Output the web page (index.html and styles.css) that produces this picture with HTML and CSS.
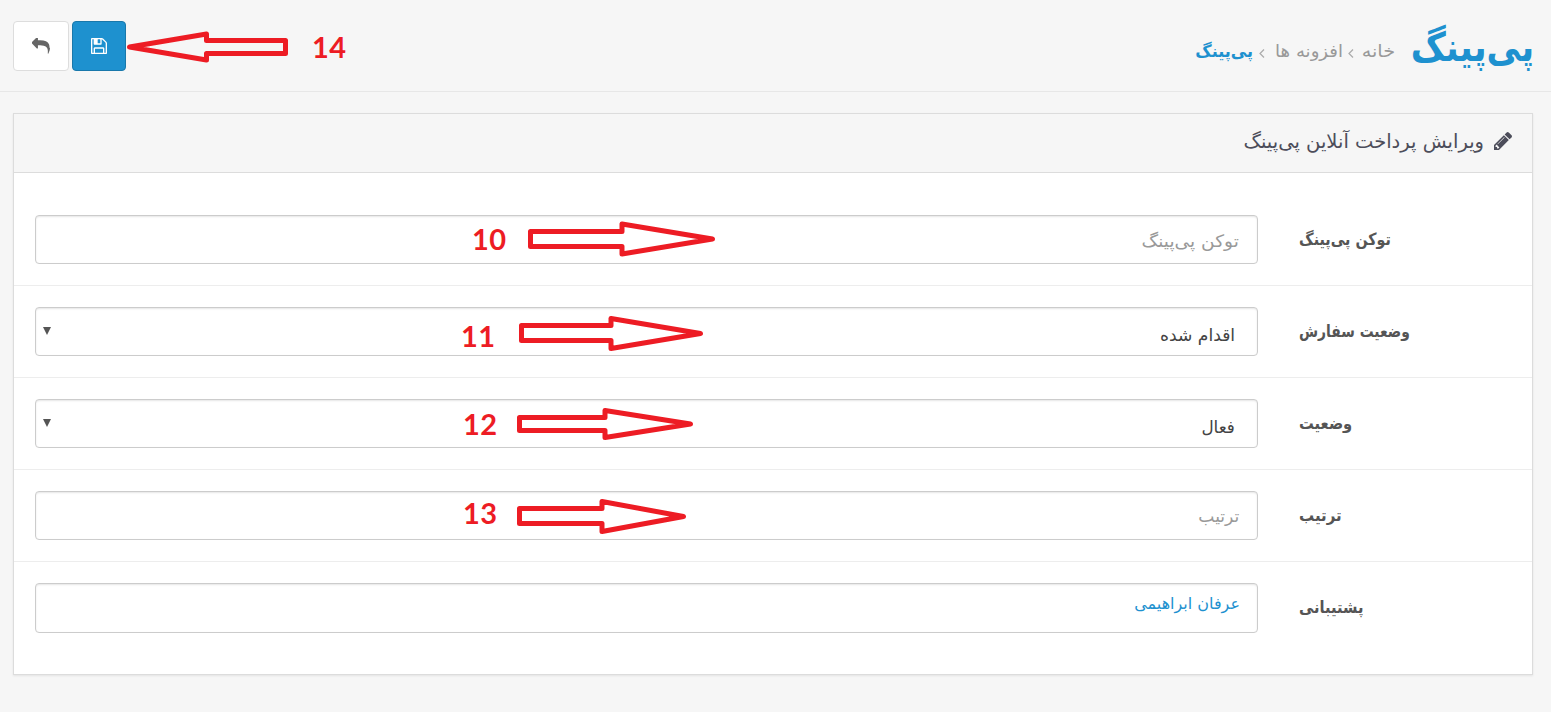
FILE: index.html
```html
<!DOCTYPE html>
<html lang="fa" dir="rtl">
<head>
<meta charset="utf-8">
<title>پی‌پینگ</title>
<link rel="stylesheet" href="styles.css">
</head>
<body>
<header class="page-header">
  <div class="heading">
    <h1 class="title">پی‌پینگ</h1>
    <nav class="breadcrumb">
      <span class="crumb crumb-home">خانه</span>
      <svg class="sep" viewBox="0 0 6 9"><path d="M5 .5 1 4.5l4 4"/></svg>
      <span class="crumb crumb-ext">افزونه ها</span>
      <svg class="sep sep-wide" viewBox="0 0 6 9"><path d="M5 .5 1 4.5l4 4"/></svg>
      <span class="crumb crumb-active">پی‌پینگ</span>
    </nav>
  </div>
  <div class="actions">
    <button class="btn btn-primary" type="button" aria-label="ذخیره"><svg class="icon-save" viewBox="0 0 1536 1536"><path transform="matrix(1 0 0 -1 0 1408)" d="M384 0h768v384h-768v-384zM1280 0h128v896q0 14 -10 38.5t-20 34.5l-281 281q-10 10 -34 20t-39 10v-416q0 -40 -28 -68t-68 -28h-576q-40 0 -68 28t-28 68v416h-128v-1280h128v416q0 40 28 68t68 28h832q40 0 68 -28t28 -68v-416zM896 928v320q0 13 -9.500 22.500t-22.500 9.500h-192q-13 0 -22.500 -9.500t-9.500 -22.500v-320q0 -13 9.500 -22.500t22.500 -9.500h192q13 0 22.500 9.500t9.500 22.500zM1536 896v-928q0 -40 -28 -68t-68 -28h-1344q-40 0 -68 28t-28 68v1344q0 40 28 68t68 28h928q40 0 88 -20t76 -48l280 -280q28 -28 48 -76t20 -88z"/></svg></button>
    <button class="btn btn-default" type="button" aria-label="بازگشت"><svg class="icon-reply" viewBox="0 0 1792 1536"><path transform="matrix(1 0 0 -1 0 1408)" d="M1792 416q0 -166 -127 -451q-3 -7 -10.500 -24t-13.500 -30t-13 -22q-12 -17 -28 -17q-15 0 -23.500 10t-8.500 25q0 9 2.500 26.500t2.500 23.500q5 68 5 123q0 112 -19.500 200.500t-54 153.500t-88.500 112t-114.500 79.500t-143.500 48.500t-163 22.500t-180 6.500h-224v-256q0 -26 -19 -45t-45 -19t-45 19l-512 512q-19 19 -19 45t19 45l512 512q19 19 45 19t45 -19t19 -45v-256h224q713 0 875 -403q53 -134 53 -333z"/></svg></button>
  </div>
</header>

<main class="panel">
  <div class="panel-head">
    <svg class="icon-pencil" viewBox="0 0 1515 1515"><path transform="matrix(1 0 0 -1 0 1387)" d="M363 0l91 91l-235 235l-91 -91v-107h128v-128h107zM886 928q0 22 -22 22q-10 0 -17 -7l-542 -542q-7 -7 -7 -17q0 -22 22 -22q10 0 17 7l542 542q7 7 7 17zM832 1120l416 -416l-832 -832h-416v416zM1515 1024q0 -53 -37 -90l-166 -166l-416 416l166 165q36 38 90 38q53 0 91 -38l235 -234q37 -39 37 -91z"/></svg>
    <h2 class="panel-title">ویرایش پرداخت آنلاین پی‌پینگ</h2>
  </div>
  <form class="panel-body">
    <div class="row">
      <div class="label"><span class="label-token">توکن پی‌پینگ</span></div>
      <div class="field"><span class="placeholder value-token">توکن پی‌پینگ</span></div>
    </div>
    <div class="row">
      <div class="label"><span class="label-order">وضعیت سفارش</span></div>
      <div class="field select"><span class="value-order">اقدام شده</span><i class="caret"></i></div>
    </div>
    <div class="row">
      <div class="label"><span class="label-status">وضعیت</span></div>
      <div class="field select"><span class="value-status">فعال</span><i class="caret"></i></div>
    </div>
    <div class="row">
      <div class="label"><span class="label-sort">ترتیب</span></div>
      <div class="field"><span class="placeholder value-sort">ترتیب</span></div>
    </div>
    <div class="row">
      <div class="label"><span class="label-support">پشتیبانی</span></div>
      <div class="field field-link"><a class="value-support">عرفان ابراهیمی</a></div>
    </div>
  </form>
</main>

<svg class="annotations" viewBox="0 0 1551 712" direction="ltr">
  <g class="arrows">
    <path d="M129.500 47 206.500 34v6.500h79v13h-79V60z"/>
    <path d="M712.500 239 622 224v7.500h-91.500v15H622v7.500z"/>
    <path d="M700.500 333.500 611 318.500v7h-89.500v15H611v8z"/>
    <path d="M690.500 424 605 410.500v7h-85.500v13H605v7z"/>
    <path d="M683.500 516.500 602 501.500v7h-82.500v15H602v8z"/>
  </g>
  <g class="numbers">
    <text x="312" y="58" textLength="34">14</text>
    <text x="472" y="250" textLength="34">10</text>
    <text x="461" y="347" textLength="34">11</text>
    <text x="463" y="435" textLength="34">12</text>
    <text x="463" y="524" textLength="34">13</text>
  </g>
</svg>
</body>
</html>
```
FILE: styles.css
```css
* { box-sizing: border-box; }

body {
  margin: 0;
  height: 712px;
  overflow: hidden;
  background: #f6f6f6;
  color: #4c4d5a;
  font-family: "DejaVu Sans", sans-serif;
}

.page-header {
  display: flex;
  justify-content: space-between;
  align-items: flex-start;
  height: 92px;
  padding: 21px 18px 0 13px;
  border-bottom: 1px solid #e7e7e7;
}

.heading { display: flex; align-items: flex-start; }

.title {
  margin: 0;
  width: 122px;
  font-size: 38px;
  line-height: 48px;
  font-weight: bold;
  white-space: nowrap;
  color: #1e91cf;
  transform: translate(1px, 2px) scale(.9, 1.06);
  transform-origin: right center;
}

.breadcrumb {
  display: flex;
  align-items: center;
  height: 62px;
  margin-right: 16px;
  font-size: 16px;
  white-space: nowrap;
  color: #999;
}

.crumb { flex: none; line-height: 24px; transform-origin: right center; }
.crumb-home { width: 34px; transform: scale(1.2, 1.08); }
.crumb-ext { width: 68px; transform: scale(1.13, 1.08); }
.crumb-active { width: 58px; font-weight: bold; color: #1e91cf; transform: scaleY(1.08); }

.sep {
  flex: none;
  width: 6px;
  height: 9px;
  margin: 2px 7px 0 5px;
  fill: none;
  stroke: #aaa;
  stroke-width: 1.2;
}
.sep-wide { margin: 2px 10px 0 6px; }

.actions { display: flex; gap: 3px; }

.btn {
  display: flex;
  align-items: center;
  justify-content: center;
  height: 50px;
  padding: 0;
  border-radius: 4px;
}
.btn-primary { width: 54px; background: #1e91cf; border: 1px solid #1978ab; }
.btn-default { width: 56px; background: #fff; border: 1px solid #ddd; }
.icon-save { width: 16px; height: 16px; fill: #fff; }
.icon-reply { width: 18px; height: 16px; fill: #666; }

.panel {
  width: 1520px;
  height: 562px;
  margin: 21px 18px 0 0;
  background: #fff;
  border: 1px solid #dcdcdc;
  box-shadow: 0 1px 2px rgba(0, 0, 0, .08);
}

.panel-head {
  display: flex;
  align-items: flex-start;
  gap: 10px;
  height: 59px;
  padding: 18px 20px 0;
  background: #f6f6f6;
  border-bottom: 1px solid #dcdcdc;
}
.icon-pencil { width: 18px; height: 18px; fill: #4c4d5a; }

.panel-title {
  margin: -1px 0 0;
  font-size: 19.500px;
  line-height: 22px;
  font-weight: normal;
  white-space: nowrap;
}

.panel-body { padding-top: 21px; }

.row {
  display: flex;
  align-items: flex-start;
  height: 92px;
  padding: 21px 20px 0 0;
  border-bottom: 1px solid #ededed;
}
.row:last-child { border-bottom: 0; }

.label {
  width: 213px;
  height: 49px;
  direction: ltr;
  font-size: 16px;
  line-height: 49px;
  font-weight: bold;
  white-space: nowrap;
  color: #555;
}
.label span { display: inline-block; transform-origin: left center; }
.label-token { transform: scale(.893, 1.05); }
.label-order { transform: scale(.865, 1.05); }
.label-status { transform: scale(.92, 1.05); }
.label-sort { transform: scale(.94, 1.05); }
.label-support { transform: scale(.92, 1.05); }

.field {
  display: flex;
  justify-content: space-between;
  width: 1223px;
  height: 49px;
  margin-right: 41px;
  padding: 0 18px 0 7px;
  border: 1px solid #ccc;
  border-radius: 4px;
  box-shadow: inset 0 1px 2px rgba(0, 0, 0, .1);
  font-size: 16px;
  line-height: 49px;
  white-space: nowrap;
  color: #555;
}
.field > span { transform-origin: right center; }
.value-token { transform: scale(1.16, 1.08); }
.value-order { transform: scale(1.07, 1.06); }
.value-status { transform: scale(1.05, 1.06); }
.value-sort { transform: scale(1.07, 1.06); }
.placeholder { color: #999; }
.select { padding-right: 22px; line-height: 54px; color: #444; }
.field-link { height: 50px; padding-right: 17px; line-height: 39px; color: #1e91cf; }

.caret {
  width: 8px;
  height: 8px;
  margin-top: 19px;
  background: #555;
  clip-path: polygon(0 0, 100% 0, 50% 100%);
}

.annotations {
  position: absolute;
  top: 0;
  left: 0;
  width: 1551px;
  height: 712px;
  pointer-events: none;
}
.arrows {
  fill: none;
  stroke: #ed1c24;
  stroke-width: 5;
  stroke-linejoin: round;
}
.numbers {
  fill: #ed1c24;
  font: bold 29px Lato, sans-serif;
}
```
